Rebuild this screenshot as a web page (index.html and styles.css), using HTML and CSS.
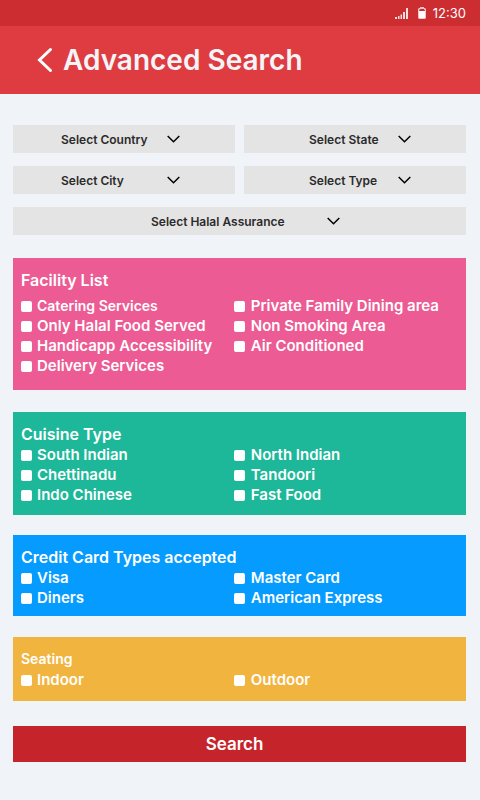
FILE: index.html
```html
<!DOCTYPE html>
<html lang="en">
<head>
<meta charset="utf-8">
<meta name="viewport" content="width=device-width, initial-scale=1">
<title>Advanced Search</title>
<link rel="stylesheet" href="styles.css">
</head>
<body>
<div class="status">
  <svg class="signal" viewBox="0 0 13 11" aria-hidden="true"><path d="M0 9h2v2H0zM3 8h1.500v3H3zM5.500 6.500H7V11H5.500zM8 4h2v7H8zM11 0h2v11h-2z"/></svg>
  <svg class="battery" viewBox="0 0 8 12" aria-hidden="true"><path class="shell" d="M2 0h4v1h1l1 1v9l-1 1H1l-1-1V2l1-1h1z"/><path class="empty" d="M2 2h4l1 2H1z"/><path d="M1 4h6v7H1z"/></svg>
  <span class="clock">12:30</span>
</div>
<header class="bar">
  <a class="back" href="#" aria-label="Back"><svg viewBox="0 0 16 26" aria-hidden="true"><path d="M13.500 2.500L2.500 13l11 10.500"/></svg></a>
  <h1 class="title">Advanced Search</h1>
</header>
<form class="search">
  <div class="filters">
    <div class="picker"><select aria-label="Country"><option>Select Country</option></select><svg viewBox="0 0 13 8" aria-hidden="true"><path d="M.7 1l5.800 5.800L12.300 1"/></svg></div>
    <div class="picker picker-end"><select aria-label="State"><option>Select State</option></select><svg viewBox="0 0 13 8" aria-hidden="true"><path d="M.7 1l5.800 5.800L12.300 1"/></svg></div>
    <div class="picker"><select aria-label="City"><option>Select City</option></select><svg viewBox="0 0 13 8" aria-hidden="true"><path d="M.7 1l5.800 5.800L12.300 1"/></svg></div>
    <div class="picker picker-end"><select aria-label="Type"><option>Select Type</option></select><svg viewBox="0 0 13 8" aria-hidden="true"><path d="M.7 1l5.800 5.800L12.300 1"/></svg></div>
    <div class="picker picker-wide"><select aria-label="Halal Assurance"><option>Select Halal Assurance</option></select><svg viewBox="0 0 13 8" aria-hidden="true"><path d="M.7 1l5.800 5.800L12.300 1"/></svg></div>
  </div>
  <section class="panel facility">
    <h2>Facility List</h2>
    <div class="options">
      <label class="small"><input type="checkbox">Catering Services</label>
      <label><input type="checkbox">Private Family Dining area</label>
      <label><input type="checkbox">Only Halal Food Served</label>
      <label><input type="checkbox">Non Smoking Area</label>
      <label><input type="checkbox">Handicapp Accessibility</label>
      <label><input type="checkbox">Air Conditioned</label>
      <label><input type="checkbox">Delivery Services</label>
    </div>
  </section>
  <section class="panel cuisine">
    <h2>Cuisine Type</h2>
    <div class="options">
      <label><input type="checkbox">South Indian</label>
      <label><input type="checkbox">North Indian</label>
      <label><input type="checkbox">Chettinadu</label>
      <label><input type="checkbox">Tandoori</label>
      <label><input type="checkbox">Indo Chinese</label>
      <label><input type="checkbox">Fast Food</label>
    </div>
  </section>
  <section class="panel cards">
    <h2>Credit Card Types accepted</h2>
    <div class="options">
      <label><input type="checkbox">Visa</label>
      <label><input type="checkbox">Master Card</label>
      <label><input type="checkbox">Diners</label>
      <label><input type="checkbox">American Express</label>
    </div>
  </section>
  <section class="panel seating">
    <h2 class="small">Seating</h2>
    <div class="options">
      <label><input type="checkbox">Indoor</label>
      <label><input type="checkbox">Outdoor</label>
    </div>
  </section>
  <button class="submit" type="submit">Search</button>
</form>
</body>
</html>
```
FILE: styles.css
```css
* { box-sizing: border-box; }
body {
  margin: 0;
  background: #f0f4f8;
  font-family: Inter, sans-serif;
  font-weight: 600;
}
.status {
  display: flex;
  align-items: center;
  justify-content: flex-end;
  height: 26px;
  padding: 0 14px;
  background: #cb2d30;
  color: #fff;
}
.status svg { fill: #fff; }
.signal { width: 13px; height: 11px; margin-right: 10px; opacity: .85; }
.battery { width: 8px; height: 12px; margin-right: 7px; }
.battery .shell { fill: #f4c4c5; }
.battery .empty { fill: #cb2d30; }
.clock { font-size: 13px; font-weight: 400; line-height: 26px; }
.bar {
  display: flex;
  align-items: center;
  gap: 10px;
  height: 68px;
  padding: 0 37px;
  background: #df3c41;
  color: #f3f4f8;
}
.back svg {
  display: block;
  width: 16px;
  height: 26px;
  fill: none;
  stroke: #fff;
  stroke-width: 3;
  stroke-linecap: round;
}
.title { margin: 0; font-size: 28px; font-weight: 600; line-height: 36px; }
.search { padding: 31px 14px 38px 13px; }
.filters {
  display: grid;
  grid-template-columns: 1fr 1fr;
  gap: 13px 9px;
  margin-bottom: 23px;
}
.picker { display: grid; align-items: center; background: #e4e4e4; }
.picker > * { grid-area: 1 / 1; }
.picker select {
  appearance: none;
  width: 100%;
  height: 28px;
  padding: 0 0 0 48px;
  border: 0;
  border-radius: 0;
  background: none;
  color: #2b2b2b;
  font: inherit;
  font-size: 12px;
}
.picker svg {
  width: 13px;
  height: 8px;
  margin-right: 55px;
  justify-self: end;
  fill: none;
  stroke: #000;
  stroke-width: 1.5;
  pointer-events: none;
}
.picker-end select { padding-left: 65px; }
.picker-wide { grid-column: 1 / -1; }
.picker-wide select { padding-left: 138px; }
.picker-wide svg { margin-right: 126px; }
.panel { margin-bottom: 21px; padding: 12px 0 10px 8px; color: #fff; }
.panel h2 { margin: 0 0 1px; font-size: 16px; font-weight: 600; line-height: 20px; }
.options { display: grid; grid-template-columns: 11fr 12fr; }
.options label {
  display: flex;
  align-items: center;
  gap: 5px;
  font-size: 15px;
  line-height: 20px;
  white-space: nowrap;
}
.options label:nth-child(even) { gap: 6px; }
.panel .small { font-size: 14px; }
.options input {
  appearance: none;
  flex: none;
  width: 11px;
  height: 11px;
  margin: 0;
  border-radius: 2px;
  background: #fff;
}
.options input:checked { border: 3px solid #fff; background: #333; }
.facility { margin-bottom: 22px; padding-bottom: 14px; background: #ec5b93; }
.facility h2 { margin-bottom: 6px; }
.cuisine { margin-bottom: 20px; padding-bottom: 10px; background: #1db899; }
.cards { padding-bottom: 8px; background: #059bff; }
.seating { padding-bottom: 11px; background: #f1b43f; }
.submit {
  display: block;
  width: 100%;
  height: 36px;
  margin-top: 25px;
  padding: 0 10px 0 0;
  border: 0;
  background: #c5242a;
  color: #fff;
  font: inherit;
  font-size: 17px;
}
```
